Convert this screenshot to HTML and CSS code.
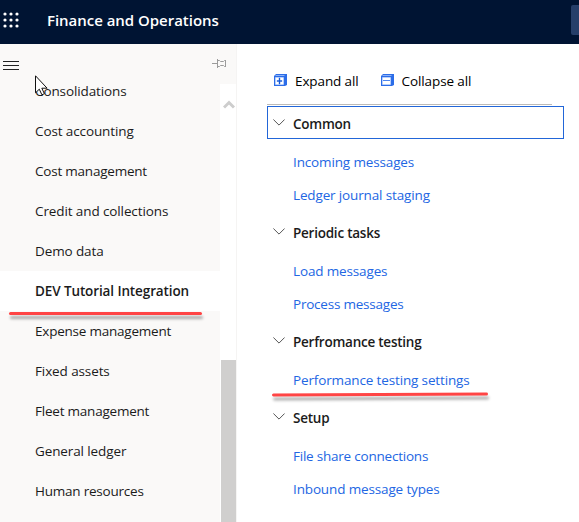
FILE: index.html
```html
<!DOCTYPE html>
<html lang="en">
<head>
<meta charset="utf-8">
<title>Finance and Operations</title>
<link rel="stylesheet" href="styles.css">
</head>
<body>
<header class="topbar">
  <svg class="waffle" width="18" height="18" viewBox="0 0 18 18" fill="#fff">
    <circle cx="2" cy="3" r="1.6"/><circle cx="8" cy="3" r="1.6"/><circle cx="14" cy="3" r="1.6"/>
    <circle cx="2" cy="9" r="1.6"/><circle cx="8" cy="9" r="1.6"/><circle cx="14" cy="9" r="1.6"/>
    <circle cx="2" cy="15" r="1.6"/><circle cx="8" cy="15" r="1.6"/><circle cx="14" cy="15" r="1.6"/>
  </svg>
  <h1 class="brand">Finance and Operations</h1>
  <div class="search"></div>
</header>
<div class="body">
  <aside class="sidebar">
    <svg class="burger" width="16" height="10" viewBox="0 0 16 10" fill="#222"><path d="M0 0h16v1H0zM0 4h16v1H0zM0 8h16v1H0z"/></svg>
    <svg class="pin" width="15" height="10" viewBox="0 0 15 10" fill="none" stroke="#9b9b9b"><path d="M0 4.5h5M5.5 0v9M5.5 1.5h2l1 1h3l1-1h1.500M5.500 7.500h2l1-1h3l1 1h1.500M13.500 1v7"/></svg>
    <nav class="modules">
      <a class="module">Consolidations</a>
      <a class="module">Cost accounting</a>
      <a class="module tight">Cost management</a>
      <a class="module">Credit and collections</a>
      <a class="module">Demo data</a>
      <a class="module selected">DEV Tutorial Integration<span class="mark mark-module"></span></a>
      <a class="module tight">Expense management</a>
      <a class="module">Fixed assets</a>
      <a class="module tight">Fleet management</a>
      <a class="module">General ledger</a>
      <a class="module tight">Human resources</a>
    </nav>
    <div class="scrollbar">
      <svg class="up" width="12" height="9" viewBox="0 0 12 9" fill="none" stroke="#cdcdcd" stroke-width="3"><path d="M1 7.5l5-5 5 5"/></svg>
      <div class="thumb"></div>
    </div>
    <svg class="cursor" width="14" height="21" viewBox="0 0 14 21"><path d="M.5 .8v17l3.800-3.600 2.600 5.600 2.500-1.100-2.600-5.500h5.300z" fill="#fff" stroke="#111"/></svg>
  </aside>
  <main class="content">
    <div class="toolbar">
      <a class="tool"><svg width="13" height="13" viewBox="0 0 13 13"><path d="M2 0h11v11l-2 1H0V2z" fill="#2c6de8"/><path d="M2 1h9L10 2H1z" fill="#8db2f7"/><path d="M1.5 3.5h8v7h-8z" fill="#2c6de8" stroke="#b8cffb"/><path d="M2 4h7v6H2z" fill="#fff"/><path d="M5 4h1v6H5zM3 6.5h5v1H3z" fill="#1559d6" stroke="#1559d6" stroke-width=".4"/></svg><span>Expand all</span></a>
      <a class="tool"><svg width="13" height="13" viewBox="0 0 13 13"><path d="M2 0h11v11l-2 1H0V2z" fill="#2c6de8"/><path d="M2 1h9L10 2H1z" fill="#8db2f7"/><path d="M1.5 3.5h8v7h-8z" fill="#2c6de8" stroke="#b8cffb"/><path d="M2 4h7v6H2z" fill="#fff"/><path d="M2 6h7v1H2z" fill="#4c84ee"/></svg><span>Collapse all</span></a>
    </div>
    <section class="group">
      <h2 class="head focused"><svg class="chev" width="12" height="7" viewBox="0 0 12 7"><path d="M.4.5L6 6.1 11.6.5"/></svg>Common</h2>
      <div class="links"><a>Incoming messages</a><a>Ledger journal staging</a></div>
    </section>
    <section class="group">
      <h2 class="head"><svg class="chev" width="12" height="7" viewBox="0 0 12 7"><path d="M.4.5L6 6.1 11.6.5"/></svg>Periodic tasks</h2>
      <div class="links"><a>Load messages</a><a class="tight">Process messages</a></div>
    </section>
    <section class="group">
      <h2 class="head"><svg class="chev" width="12" height="7" viewBox="0 0 12 7"><path d="M.4.5L6 6.1 11.6.5"/></svg>Perfromance testing</h2>
      <div class="links"><a>Performance testing settings<span class="mark mark-link"></span></a></div>
    </section>
    <section class="group">
      <h2 class="head"><svg class="chev" width="12" height="7" viewBox="0 0 12 7"><path d="M.4.5L6 6.1 11.6.5"/></svg>Setup</h2>
      <div class="links"><a class="tight">File share connections</a><a>Inbound message types</a></div>
    </section>
  </main>
</div>
</body>
</html>
```
FILE: styles.css
```css
* { box-sizing: border-box; }
body {
  margin: 0;
  height: 522px;
  overflow: hidden;
  background: #fff;
  color: #1b1b1b;
  font: 13.5px/20px "Open Sans", "Noto Sans", sans-serif;
  letter-spacing: -.11px;
  white-space: nowrap;
}
.topbar {
  display: flex;
  align-items: center;
  height: 44px;
  padding: 0 0 4px 3px;
  background: #001433;
}
.waffle { margin-top: 0; }
.brand {
  margin: 0 0 0 26px;
  color: #fff;
  font-size: 15px;
  font-weight: 600;
  letter-spacing: -.03px;
}
.search {
  width: 8px;
  height: 30px;
  margin-left: auto;
  border-radius: 2px 0 0 2px;
  background: #263f6a;
}
.body { display: flex; height: 478px; }
.sidebar {
  position: relative;
  display: grid;
  grid-template-columns: 220px 16px;
  width: 237px;
  background: #faf9f8;
  border-right: 1px solid #f5f4f3;
}
.burger { position: absolute; left: 3px; top: 17px; }
.pin { position: absolute; left: 212px; top: 15px; }
.cursor { position: absolute; left: 35px; top: 31px; }
.modules { padding-top: 27px; }
.module {
  position: relative;
  display: flex;
  align-items: center;
  height: 40px;
  padding-left: 35px;
}
.selected { background: #fff; font-weight: 600; }
.scrollbar {
  display: flex;
  flex-direction: column;
  align-items: center;
  margin-top: 40px;
  padding-top: 16px;
  background: #fff;
}
.up { margin-left: 1px; }
.thumb { width: 15px; flex: 1; margin-top: 251px; background: #d0cfce; }
.mark {
  position: absolute;
  height: 3px;
  border-radius: 2px;
  background: #ff4545;
  box-shadow: 1px 4px 3px rgba(0, 0, 0, .32);
  z-index: 1;
}
.mark-module { left: 9px; top: 41px; width: 193px; }
.mark-link { left: -21px; top: 31px; width: 216px; transform: rotate(-.25deg); }
.content { width: 327px; padding-left: 30px; }
.toolbar {
  display: flex;
  gap: 22px;
  width: 285px;
  height: 61px;
  margin-bottom: 1px;
  padding: 27px 0 0 7px;
  border-bottom: 1px solid #bdbbb8;
  color: #000;
}
.tool { display: flex; gap: 8px; height: 20px; }
.tool svg { margin-top: 3px; }
.head {
  display: flex;
  align-items: center;
  gap: 8px;
  width: 297px;
  height: 33px;
  margin: 0;
  padding: 2px 0 0 5px;
  border: 1px solid transparent;
  font-size: 13.5px;
  font-weight: 600;
  letter-spacing: -.24px;
}
.focused { border-color: #2266d8; }
.chev { margin-top: -3px; fill: none; stroke: #555; }
.links { padding: 5px 0 5px 26px; }
.links a {
  position: relative;
  display: flex;
  align-items: center;
  height: 33px;
  padding-top: 2px;
  color: #2266e3;
  letter-spacing: -.14px;
}
.module.tight, .links .tight { letter-spacing: -.22px; }
```
